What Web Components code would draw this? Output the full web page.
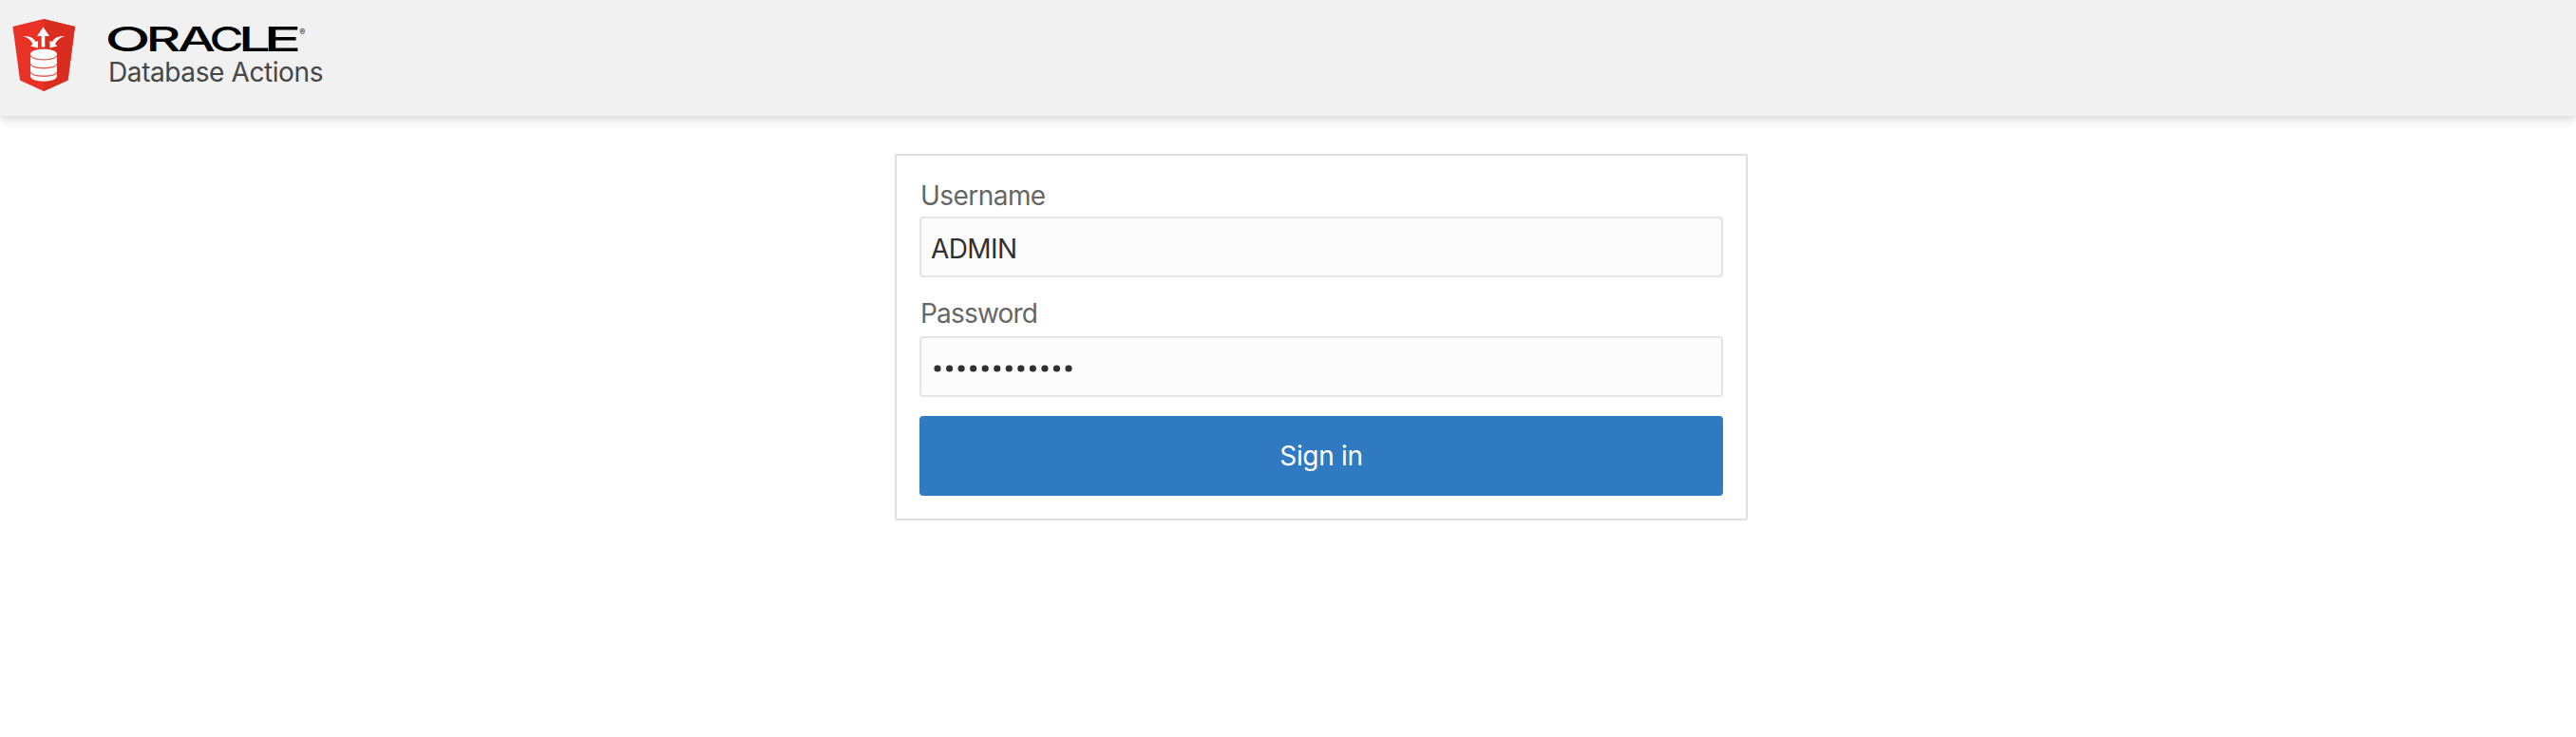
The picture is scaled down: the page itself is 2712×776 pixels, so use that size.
<!DOCTYPE html>
<html lang="en"><head><meta charset="utf-8"><title>Database Actions</title>
<style>html,body{margin:0;background:#fff}body{font-family:Inter,"Liberation Sans",sans-serif;font-size:28px;height:776px;overflow:hidden}</style></head>
<body><sign-in-page></sign-in-page>
<script>
const define=(name,html)=>customElements.define(name,class extends HTMLElement{
  constructor(){super();this.attachShadow({mode:'open'}).innerHTML=html;}
});
define('shield-logo',`<style>:host{display:block;width:66px;height:78px}svg{display:block}</style>
<svg width="66" height="78" viewBox="13 19 66 78">
<path d="M46 20 79 28 71.5 84.5 46 96 21 84.5 13.5 28Z" fill="#e93125"/>
<path d="M46 20 79 28 71.5 84.5 46 96Z" fill="#d92d20"/>
<g fill="#fff"><path d="M45.500 28.500 52 38H47.300V49.500H43.700V38H39Z"/>
<path d="M25 38Q34 37.500 37.800 44L40 43 40 50.500 32 48.500 34.500 46.500Q31.500 40 25 38.500Z"/>
<path d="M67.500 38Q58.500 37.500 54.700 44L52.500 43 52.500 50.500 60.500 48.500 58 46.500Q61 40 67.500 38.500Z"/>
<path d="M32 57C32 50 60 50 60 57V80C60 87.500 32 87.500 32 80Z"/></g>
<g fill="none" stroke="#e45b51" stroke-width="1.300"><path d="M32 58C33 64.500 59 64.500 60 58M32 67C33 73.300 59 73.300 60 67M32 75.500C33 81.800 59 81.800 60 75.500"/></g></svg>`);
const wordmark=[['O',-3.5,48],['R',39.5,37],['A',73,40],['C',106.500,36],['L',137,34],['E',163.500,40]]
  .map(([c,x,w])=>`<tspan x="${x}" textLength="${w}" lengthAdjust="spacingAndGlyphs">${c}</tspan>`).join('');
define('oracle-wordmark',`<style>:host{display:block;height:32px;width:220px}svg{display:block;overflow:visible}text{font-family:Inter,sans-serif}</style>
<svg width="220" height="32"><text y="29.500" font-size="35.500" font-weight="500">${wordmark}</text><text x="201.500" y="12.500" font-size="8.500">®</text></svg>`);
define('app-header',`<style>:host{display:flex;box-sizing:border-box;height:122px;background:#f1f1f1;box-shadow:0 3px 9px 1px rgba(0,0,0,.15);padding:19px 0 0 13px}
.brand{margin:5px 0 0 35px}.name{color:#464646;line-height:34px;margin-top:3px;letter-spacing:-.4px;white-space:nowrap}</style>
<shield-logo></shield-logo><div class="brand"><oracle-wordmark></oracle-wordmark><div class="name"><slot></slot></div></div>`);
customElements.define('form-field',class extends HTMLElement{
  constructor(){super();this.attachShadow({mode:'open'}).innerHTML=`<style>:host{display:block}
label{display:block;height:36px;line-height:37px;padding-left:1px;color:#666;letter-spacing:var(--label-spacing,0);margin-bottom:var(--label-gap,4px)}
.box{box-sizing:border-box;height:64px;border:2px solid #e4e4e4;border-radius:4px;background:#fcfcfc;color:#303030;padding:3px 10px 0;display:flex;align-items:center}
.dots{display:block;margin-left:1px}.value{letter-spacing:-.6px}</style><label></label><div class="box"></div>`;}
  connectedCallback(){const r=this.shadowRoot;r.querySelector('label').textContent=this.getAttribute('label');
    const box=r.querySelector('.box'),n=+this.getAttribute('masked');
    box.innerHTML=n?'<svg class="dots" width="160" height="12" fill="#303030">'+Array.from({length:n},(_,i)=>`<circle cx="${6+i*12.55}" cy="6" r="3.600"/>`).join('')+'</svg>':'<span class="value"><slot></slot></span>';}
});
define('primary-button',`<style>:host{display:block}button{display:block;width:100%;height:84px;border:0;border-radius:4px;background:#307ac1;color:#fff;font:inherit;letter-spacing:-.3px;padding:0}</style><button><slot></slot></button>`);
define('login-card',`<style>:host{display:block;box-sizing:border-box;width:898px;height:386px;border:2px solid #e0e0e0;border-radius:2px;padding:24px}</style><slot></slot>`);
define('sign-in-page',`<style>:host{display:block}login-card{margin:40px 0 0 942px}.user{--label-spacing:-.55px}.pass{margin-top:20px;--label-spacing:-.8px;--label-gap:6px}primary-button{margin-top:20px}</style>
<app-header>Database Actions</app-header><login-card><form-field class="user" label="Username">ADMIN</form-field><form-field class="pass" label="Password" masked="12"></form-field><primary-button>Sign in</primary-button></login-card>`);
</script></body></html>
